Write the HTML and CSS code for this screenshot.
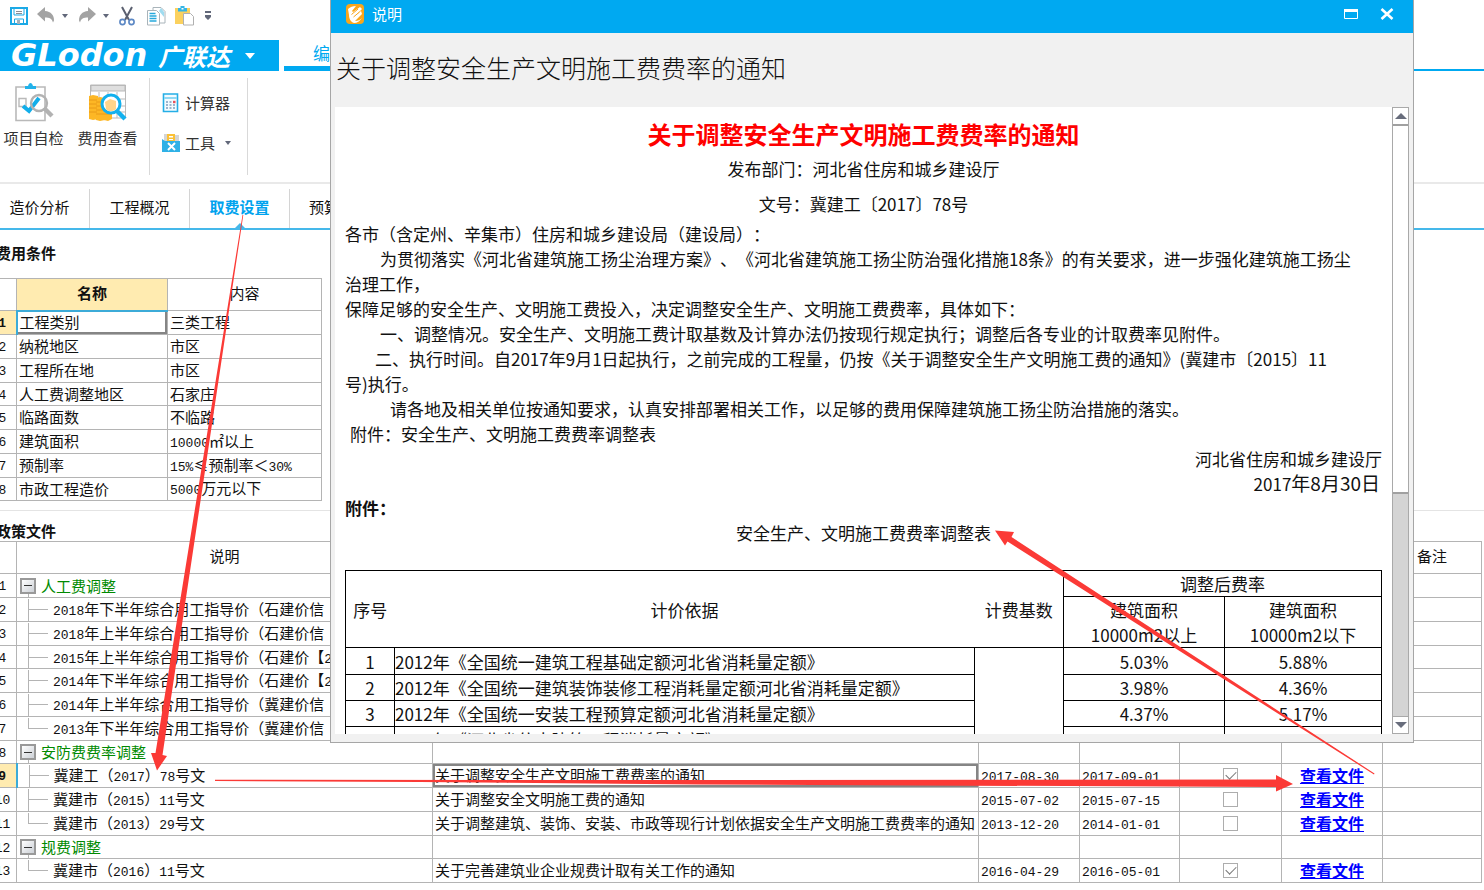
FILE: index.html
```html
<!DOCTYPE html>
<html lang="zh-CN">
<head>
<meta charset="utf-8">
<title>取费设置</title>
<link rel="stylesheet" href="styles.css">
</head>
<body>
<div class="app">
  <header>
    <div class="quickbar">
      <button class="icon-btn" aria-label="保存"><svg width="18" height="18" viewBox="0 0 18 18" fill="none"><path d="M1 1h16v16H1z" stroke="#1ba9e6" stroke-width="2"/><path d="M4 2v6h10V2M4.500 17v-5h9v5" stroke="#1ba9e6"/><path d="M6 4.500h6M6 6.500h6" stroke="#8c8c94"/><path d="M7 13h3v4H7z" fill="#a8b0b8"/></svg></button>
      <button class="icon-btn" aria-label="撤销"><svg width="18" height="18" viewBox="0 0 18 18"><path d="M8 0v4c6 .5 9 4 9 9.500l-1 2c-1-4-3.500-5-8-5v4L0 7z" fill="#a3a3a3"/></svg></button>
      <button class="icon-btn caret" aria-label="撤销列表"><svg width="8" height="6" viewBox="0 0 8 6"><path d="M1 1h6L4 5z" fill="#62687a"/></svg></button>
      <button class="icon-btn" aria-label="恢复"><svg width="18" height="18" viewBox="0 0 18 18"><path d="M10 0v4c-6 .5-9 4-9 9.500l1 2c1-4 3.500-5 8-5v4l8-7.500z" fill="#a3a3a3"/></svg></button>
      <button class="icon-btn caret" aria-label="恢复列表"><svg width="8" height="6" viewBox="0 0 8 6"><path d="M1 1h6L4 5z" fill="#62687a"/></svg></button>
      <button class="icon-btn" aria-label="剪切"><svg width="16" height="20" viewBox="0 0 16 20" fill="none"><path d="M3 1l7 13M13 1l-7 13" stroke="#5b6070" stroke-width="2"/><circle cx="3.500" cy="16" r="2.600" stroke="#5b87c4" stroke-width="1.600"/><circle cx="12.500" cy="16" r="2.600" stroke="#5b87c4" stroke-width="1.600"/></svg></button>
      <button class="icon-btn copy" aria-label="复制"><svg width="20" height="20" viewBox="0 0 20 20" fill="#fff"><path d="M7 1.500h8l4 4V17H7z" stroke="#a9b4ba"/><path d="M13 5l5 6v-5l-3-4z" fill="#9fdcf0"/><path d="M1.500 4.500h9l3 3V19h-12z" stroke="#a9b4ba"/><path d="M3.500 7.500h6M3.500 10h7M3.500 12.500h7M3.500 15h7" stroke="#27a9dc" stroke-width="1.400"/></svg></button>
      <button class="icon-btn" aria-label="粘贴"><svg width="20" height="20" viewBox="0 0 20 20"><path d="M0 2h15v16H0z" fill="#fbd15e"/><path d="M3 2h2.500V0h4v2H12v3.500H3z" fill="#35b5e5"/><path d="M6.500 2h2v1.500h-2z" fill="#fff"/><path d="M8.500 7.500h7l3 3V19h-10z" fill="#fff" stroke="#b0b0b0"/></svg></button>
      <button class="icon-btn" aria-label="更多"><svg width="8" height="10" viewBox="0 0 8 10" fill="#62687a"><path d="M1 0h6v2H1zM1 4h6v2H1zM1 6h6L4 9z"/></svg></button>
    </div>
    <div class="brandbar">
      <button class="brand"><span class="brand-en">GLodon</span><span class="brand-cn">广联达</span><svg width="10" height="6" viewBox="0 0 10 6"><path d="M0 0h10L5 6z" fill="#fff"/></svg></button>
      <button class="ribbon-tab">编</button>
      <span class="brand-line"></span>
    </div>
    <div class="ribbon">
      <button class="big-tool"><svg width="40" height="40" viewBox="0 0 40 40" fill="none"><path d="M2 5h29v33.500H2z" stroke="#b9b9b9" stroke-width="1.600"/><path d="M11 7V4h3c1-4 4-4 5 0h3v3z" fill="#22b2ea"/><path d="M5 16.500h7v8H5z" stroke="#b9b9b9" stroke-width="1.400"/><path d="M9 24l6 5 10-13" stroke="#12aeea" stroke-width="4"/><circle cx="25" cy="21" r="8" stroke="#b2b2b2" stroke-width="2.400"/><path d="M30 26l8 8" stroke="#b2b2b2" stroke-width="4.500"/></svg><span>项目自检</span></button>
      <button class="big-tool"><svg width="40" height="40" viewBox="0 0 40 40" fill="none"><path d="M2.500 3h35v33h-35zM3 17h34M3 24h34M3 30h34M11 10v26M20 10v26M29 10v26" stroke="#b9b9b9"/><path d="M3 3.500h34V9H3z" fill="#dfdfdf" stroke="#b9b9b9"/><path d="M1 14l4-1 5 1v23l-5 1-4-1zM8 16l4-1 5 1v22l-5 1-4-1zM16 29h8v8l-4 2-4-1z" fill="#fdb725"/><path d="M1 18h8M1 22h8M1 26h8M1 30h8M8 20h9M8 24h9M8 28h9M8 32h16" stroke="#e99a18"/><circle cx="23" cy="22" r="9" fill="#fff" stroke="#12b0ee" stroke-width="3"/><path d="M17 20l5-3 6 2v8c-3 3-8 3-10 0z" fill="#ffd48a"/><path d="M29 29l8 8" stroke="#12b0ee" stroke-width="4.500"/></svg><span>费用查看</span></button>
      <div class="small-tools">
        <button class="small-tool"><svg width="18" height="20" viewBox="0 0 18 20" fill="none"><path d="M1.500 1h14v17.500h-14z" fill="#f4fbfe" stroke="#24aee6" stroke-width="1.600"/><path d="M2 4h13v2H2z" fill="#8fd8f4"/><path d="M4 9h2M7.500 9h2M4 12h2M7.500 12h2M11 12h2M4 15h2M7.500 15h2M11 15h2" stroke="#7d9fc0" stroke-width="1.500"/><path d="M11 9h2.500" stroke="#e8505a" stroke-width="2.400"/></svg><span>计算器</span></button>
        <button class="small-tool"><svg width="18" height="20" viewBox="0 0 18 20"><path d="M2 1h5v9H2zM13 2h4v9h-4z" fill="#d5d5d5"/><path d="M5 1h8v9H5z" fill="#fbc136"/><path d="M7 3h4v1.500H7zM7 6h4v1H7z" fill="#fff"/><path d="M0 6l3 2h15v11H0z" fill="#2fb1e6"/><path d="M6 10l7 7M13 10l-7 7" stroke="#fff" stroke-width="2"/></svg><span>工具</span><svg class="drop" width="8" height="6" viewBox="0 0 8 6"><path d="M1 1h6L4 5z" fill="#62687a"/></svg></button>
      </div>
    </div>
  </header>
  <nav class="tabs">
    <button class="tab">造价分析</button>
    <button class="tab">工程概况</button>
    <button class="tab active">取费设置</button>
    <button class="tab lead">预算</button>
  </nav>
  <main>
    <section class="conditions">
      <h2>费用条件</h2>
      <table class="grid cond-grid">
        <colgroup><col class="c-no"><col class="c-name"><col class="c-value"></colgroup>
        <thead><tr><th></th><th class="current">名称</th><th>内容</th></tr></thead>
        <tbody>
          <tr><td class="no current"><span class="num">1</span></td><td class="picked-blue">工程类别</td><td>三类工程</td></tr>
          <tr><td class="no"><span class="num">2</span></td><td>纳税地区</td><td>市区</td></tr>
          <tr><td class="no"><span class="num">3</span></td><td>工程所在地</td><td>市区</td></tr>
          <tr><td class="no"><span class="num">4</span></td><td>人工费调整地区</td><td>石家庄</td></tr>
          <tr><td class="no"><span class="num">5</span></td><td>临路面数</td><td>不临路</td></tr>
          <tr><td class="no"><span class="num">6</span></td><td>建筑面积</td><td><span class="num">10000</span>㎡以上</td></tr>
          <tr><td class="no"><span class="num">7</span></td><td>预制率</td><td><span class="num">15%</span>≤预制率＜<span class="num">30%</span></td></tr>
          <tr><td class="no"><span class="num">8</span></td><td>市政工程造价</td><td><span class="num">5000</span>万元以下</td></tr>
        </tbody>
      </table>
    </section>
    <section class="policies">
      <h2>政策文件</h2>
      <table class="grid policy-grid">
        <colgroup><col class="c-no"><col class="c-desc"><col class="c-title"><col class="c-date"><col class="c-start"><col class="c-check"><col class="c-link"><col></colgroup>
        <thead><tr><th></th><th>说明</th><th></th><th></th><th></th><th></th><th></th><th>备注</th></tr></thead>
        <tbody>
          <tr><td class="no"><span class="num">1</span></td><td class="node"><div class="tree group"><button class="toggle" aria-label="折叠"></button>人工费调整</div></td><td></td><td></td><td></td><td></td><td></td><td></td></tr>
          <tr><td class="no"><span class="num">2</span></td><td class="node"><div class="tree"><i class="branch"></i><span><span class="num">2018</span>年下半年综合用工指导价（石建价信（</span></div></td><td></td><td></td><td></td><td></td><td></td><td></td></tr>
          <tr><td class="no"><span class="num">3</span></td><td class="node"><div class="tree"><i class="branch"></i><span><span class="num">2018</span>年上半年综合用工指导价（石建价信（</span></div></td><td></td><td></td><td></td><td></td><td></td><td></td></tr>
          <tr><td class="no"><span class="num">4</span></td><td class="node"><div class="tree"><i class="branch"></i><span><span class="num">2015</span>年上半年综合用工指导价（石建价【<span class="num">2</span></span></div></td><td></td><td></td><td></td><td></td><td></td><td></td></tr>
          <tr><td class="no"><span class="num">5</span></td><td class="node"><div class="tree"><i class="branch"></i><span><span class="num">2014</span>年下半年综合用工指导价（石建价【<span class="num">2</span></span></div></td><td></td><td></td><td></td><td></td><td></td><td></td></tr>
          <tr><td class="no"><span class="num">6</span></td><td class="node"><div class="tree"><i class="branch"></i><span><span class="num">2014</span>年上半年综合用工指导价（冀建价信</span></div></td><td></td><td></td><td></td><td></td><td></td><td></td></tr>
          <tr><td class="no"><span class="num">7</span></td><td class="node"><div class="tree"><i class="branch last"></i><span><span class="num">2013</span>年下半年综合用工指导价（冀建价信</span></div></td><td></td><td></td><td></td><td></td><td></td><td></td></tr>
          <tr><td class="no"><span class="num">8</span></td><td class="node"><div class="tree group"><button class="toggle" aria-label="折叠"></button>安防费费率调整</div></td><td></td><td></td><td></td><td></td><td></td><td></td></tr>
          <tr><td class="no current"><span class="num">9</span></td><td class="node"><div class="tree"><i class="branch"></i><span>冀建工（<span class="num">2017</span>）<span class="num">78</span>号文</span></div></td><td class="picked">关于调整安全生产文明施工费费率的通知</td><td><span class="num">2017-08-30</span></td><td><span class="num">2017-09-01</span></td><td class="mid"><input type="checkbox" aria-label="冀建工（2017）78号文" checked></td><td class="mid"><a href="#">查看文件</a></td><td></td></tr>
          <tr><td class="no"><span class="num">10</span></td><td class="node"><div class="tree"><i class="branch"></i><span>冀建市（<span class="num">2015</span>）<span class="num">11</span>号文</span></div></td><td>关于调整安全文明施工费的通知</td><td><span class="num">2015-07-02</span></td><td><span class="num">2015-07-15</span></td><td class="mid"><input type="checkbox" aria-label="冀建市（2015）11号文"></td><td class="mid"><a href="#">查看文件</a></td><td></td></tr>
          <tr><td class="no"><span class="num">11</span></td><td class="node"><div class="tree"><i class="branch last"></i><span>冀建市（<span class="num">2013</span>）<span class="num">29</span>号文</span></div></td><td>关于调整建筑、装饰、安装、市政等现行计划依据安全生产文明施工费费率的通知</td><td><span class="num">2013-12-20</span></td><td><span class="num">2014-01-01</span></td><td class="mid"><input type="checkbox" aria-label="冀建市（2013）29号文"></td><td class="mid"><a href="#">查看文件</a></td><td></td></tr>
          <tr><td class="no"><span class="num">12</span></td><td class="node"><div class="tree group"><button class="toggle" aria-label="折叠"></button>规费调整</div></td><td></td><td></td><td></td><td></td><td></td><td></td></tr>
          <tr><td class="no"><span class="num">13</span></td><td class="node"><div class="tree"><i class="branch last"></i><span>冀建市（<span class="num">2016</span>）<span class="num">11</span>号文</span></div></td><td>关于完善建筑业企业规费计取有关工作的通知</td><td><span class="num">2016-04-29</span></td><td><span class="num">2016-05-01</span></td><td class="mid"><input type="checkbox" aria-label="冀建市（2016）11号文" checked></td><td class="mid"><a href="#">查看文件</a></td><td></td></tr>
        </tbody>
      </table>
    </section>
  </main>

  <div class="dialog" role="dialog" aria-labelledby="dialog-name">
    <div class="titlebar">
      <svg width="20" height="20" viewBox="0 0 20 20"><rect x="1" y="0" width="18" height="20" rx="4" fill="#f9a61a"/><path d="M3 5c2-2 5-3 8-3L7 7l1 1 7-5 2 2-6 6 5-4 1 3-7 7c3 0 5-1 7-3-2 3-5 5-8 5-3-1-5-4-5-8z" fill="#fff"/><path d="M6.500 10.500L13 5M8.500 13l6-5" stroke="#f9a61a"/></svg>
      <span id="dialog-name">说明</span>
      <button class="win-btn" aria-label="最大化"><svg width="14" height="10" viewBox="0 0 14 10"><path d="M.5.5h13v9H.5z" fill="none" stroke="#fff"/><path d="M0 0h14v3H0z" fill="#fff"/></svg></button>
      <button class="win-btn" aria-label="关闭"><svg width="14" height="12" viewBox="0 0 14 12"><path d="M1.500 1l11 10M12.500 1l-11 10" stroke="#fff" stroke-width="2.600"/></svg></button>
    </div>
    <h1>关于调整安全生产文明施工费费率的通知</h1>
    <div class="viewer">
      <article class="doc">
        <h3>关于调整安全生产文明施工费费率的通知</h3>
        <p class="meta">发布部门：河北省住房和城乡建设厅</p>
        <p class="meta">文号：冀建工〔2017〕78号</p>
        <p>各市（含定州、辛集市）住房和城乡建设局（建设局）：</p>
        <p class="in-35">为贯彻落实《河北省建筑施工扬尘治理方案》、《河北省建筑施工扬尘防治强化措施18条》的有关要求，进一步强化建筑施工扬尘<br>治理工作，</p>
        <p>保障足够的安全生产、文明施工费投入，决定调整安全生产、文明施工费费率，具体如下：</p>
        <p class="in-35">一、调整情况。安全生产、文明施工费计取基数及计算办法仍按现行规定执行；调整后各专业的计取费率见附件。</p>
        <p class="in-30">二、执行时间。自2017年9月1日起执行，之前完成的工程量，仍按《关于调整安全生产文明施工费的通知》(冀建市〔2015〕11<br>号)执行。</p>
        <p class="in-45">请各地及相关单位按通知要求，认真安排部署相关工作，以足够的费用保障建筑施工扬尘防治措施的落实。</p>
        <p class="in-5">附件：安全生产、文明施工费费率调整表</p>
        <p class="sign">河北省住房和城乡建设厅</p>
        <p class="sign date">2017<span class="big">年8月30日</span></p>
        <p><b>附件：</b></p>
        <p class="caption">安全生产、文明施工费费率调整表</p>
        <table class="rates">
          <colgroup><col class="r-no"><col class="r-basis"><col class="r-base"><col class="r-over"><col class="r-under"></colgroup>
          <thead>
            <tr><th rowspan="2" class="open-r">序号</th><th rowspan="2" class="open-l open-r">计价依据</th><th rowspan="2" class="open-l">计费基数</th><th colspan="2">调整后费率</th></tr>
            <tr><th>建筑面积<br>10000m2以上</th><th>建筑面积<br>10000m2以下</th></tr>
          </thead>
          <tbody>
            <tr><td>1</td><td class="left">2012年《全国统一建筑工程基础定额河北省消耗量定额》</td><td rowspan="4"></td><td>5.03%</td><td>5.88%</td></tr>
            <tr><td>2</td><td class="left">2012年《全国统一建筑装饰装修工程消耗量定额河北省消耗量定额》</td><td>3.98%</td><td>4.36%</td></tr>
            <tr><td>3</td><td class="left">2012年《全国统一安装工程预算定额河北省消耗量定额》</td><td>4.37%</td><td>5.17%</td></tr>
            <tr><td>4</td><td class="left">2012年《河北省仿古建筑工程消耗量定额》</td><td>5.03%</td><td>5.03%</td></tr>
          </tbody>
        </table>
      </article>
      <div class="scrollbar">
        <button aria-label="向上滚动"><svg width="12" height="8" viewBox="0 0 12 8"><path d="M0 7h12L6 1z" fill="#686d7c"/></svg></button>
        <span class="thumb"></span><span class="track"></span>
        <button aria-label="向下滚动"><svg width="12" height="8" viewBox="0 0 12 8"><path d="M0 1h12L6 7z" fill="#686d7c"/></svg></button>
      </div>
    </div>
  </div>

  <svg class="marks" width="1484" height="890" viewBox="0 0 1484 890" fill="#fb3a36">
    <path d="M242.500 215h.8L162.500 755l4.500 1-10 14.500-6-17.500h4.500z"/>
    <path d="M215 779.800l485 .2 576-.5v-4.500l17 9-17 7.500V787l-576-2.500-280-2.500-205-1z"/>
    <path d="M1374.500 773.500L1011.500 537l2.500-5-19-1.500 10 15 2.500-4 366.500 233z"/>
  </svg>
</div>
</body>
</html>
```

FILE: styles.css
```css
* { box-sizing: border-box; }
body {
  margin: 0;
  background: #fff;
  color: #111;
  font: 15px/20px "Noto Sans CJK SC", sans-serif;
  text-spacing-trim: space-all;
}
button {
  margin: 0;
  padding: 0;
  border: 0;
  background: none;
  color: inherit;
  font: inherit;
}
h1, h2, h3, p { margin: 0; }
svg { display: block; flex: none; }

.app {
  position: relative;
  min-height: 100vh;
  overflow: hidden;
}

/* quick access bar */
.quickbar {
  display: flex;
  align-items: center;
  gap: 9px;
  height: 40px;
  padding: 0 10px 8px;
}
.icon-btn.caret { margin-left: -3px; }
.icon-btn.copy { margin-left: 2px; }

/* brand row */
.brandbar {
  display: flex;
  align-items: flex-end;
  height: 31px;
}
.brand {
  display: flex;
  align-items: center;
  width: 279px;
  height: 31px;
  padding-left: 11px;
  background: #00a9f1;
  color: #fff;
  text-align: left;
}
.brand-en {
  width: 147px;
  font: italic bold 32px/31px "DejaVu Sans", sans-serif;
}
.brand-cn {
  width: 87px;
  font-size: 24px;
  line-height: 28px;
  font-weight: bold;
  font-style: italic;
}
.ribbon-tab {
  width: 90px;
  height: 31px;
  margin-left: 5px;
  padding-left: 29px;
  border-bottom: 5px solid #00a9f1;
  color: #00a9f1;
  font-size: 17px;
  line-height: 26px;
  text-align: left;
}
.brand-line {
  flex: 1;
  height: 2px;
  background: #00a9f1;
}

/* ribbon */
.ribbon {
  display: flex;
  height: 113px;
  padding: 7px 0;
  border-bottom: 2px solid #e9e9e9;
  color: #333;
}
.big-tool {
  display: flex;
  flex-direction: column;
  align-items: center;
  gap: 6px;
  width: 74px;
  padding: 4px 7px 0 0;
  white-space: nowrap;
}
.small-tools {
  display: flex;
  flex-direction: column;
  gap: 20px;
  width: 99px;
  margin-left: 1px;
  padding: 15px 0 0 12px;
  border: solid #d9d9d9;
  border-width: 0 1px;
}
.small-tool {
  display: flex;
  align-items: center;
  gap: 5px;
}
.small-tool .drop { margin-left: 4px; }

/* module tabs */
.tabs {
  display: flex;
  height: 46px;
  margin-left: -10px;
  padding-top: 5px;
  border-bottom: 2px solid #45b8ea;
}
.tab {
  position: relative;
  width: 100px;
  padding-bottom: 3px;
  border-right: 1px solid #d4d4d4;
}
.tab.lead {
  padding-left: 19px;
  text-align: left;
}
.tab.active {
  color: #00a3ee;
  font-weight: bold;
}
.tab.active::after {
  content: "";
  position: absolute;
  bottom: 0;
  left: calc(50% - 5px);
  border: 5px solid transparent;
  border-top-width: 0;
  border-bottom-color: #45b8ea;
}

/* data grids */
h2 {
  margin-left: -4px;
  font-size: 15px;
  line-height: 20px;
}
.conditions {
  height: 281px;
  padding-top: 13px;
  border-bottom: 1px solid #e4e4e4;
}
.conditions h2 { padding-bottom: 15px; }
.policies { padding-top: 10px; }
.grid {
  table-layout: fixed;
  margin-left: -12px;
  border-collapse: collapse;
}
.cond-grid { width: 334px; }
.policy-grid { width: calc(100% + 10px); }
.grid th, .grid td {
  padding: 0 2px 1px;
  border: 1px solid #b4b4b4;
  font-weight: normal;
  line-height: 20px;
  text-align: left;
  white-space: nowrap;
}
.grid thead tr { height: 32px; }
.grid tbody tr { height: 24px; }
.grid tbody tr:nth-child(4n) { height: 23px; }
.grid th {
  padding-bottom: 3px;
  text-align: center;
}
.grid .no, .grid .mid { text-align: center; }
.grid .no {
  padding: 0;
  line-height: 16px;
}
.grid .node { padding-bottom: 0; }
.grid th.current {
  border-bottom: 2px solid #3cabd8;
  background: #ffebb0;
  font-weight: bold;
}
.grid td.current {
  border-right: 2px solid #3cabd8;
  background: #ffebb0;
  font-weight: bold;
}
.picked { box-shadow: inset 0 0 0 2px #858585; }
.picked-blue { box-shadow: inset -2px -2px #858585; }
.num {
  font-family: "Liberation Mono", monospace;
  font-size: 13px;
  line-height: 16px;
}
.c-no { width: 28px; }
.c-name { width: 151px; }
.c-desc { width: 416px; }
.c-title { width: 546px; }
.c-date, .c-link { width: 101px; }
.c-start { width: 100px; }
.c-check { width: 102px; }
.grid a {
  color: #00f;
  font-size: 16px;
  font-weight: bold;
}
input[type="checkbox"] {
  appearance: none;
  display: block;
  width: 15px;
  height: 15px;
  margin: 0 auto;
  border: 1px solid #adadad;
  background: #fff;
}
input[type="checkbox"]:checked::before {
  content: "";
  display: block;
  width: 9px;
  height: 5px;
  margin: 2px;
  border: solid #777;
  border-width: 0 0 1px 1px;
  transform: rotate(-45deg);
}
.tree {
  display: flex;
  align-items: center;
  height: 22px;
  padding-left: 9px;
}
.tree.group {
  gap: 5px;
  padding-left: 1px;
  background: linear-gradient(#b4b4b4, #b4b4b4) 9px 100% / 1px 6px no-repeat;
  color: #008a00;
}
.toggle {
  width: 16px;
  height: 16px;
  border: 2px solid #999;
  background: linear-gradient(#333, #333) center / 8px 1px no-repeat, linear-gradient(135deg, #fff, #ccd0d6);
}
.branch {
  align-self: stretch;
  width: 20px;
  margin-right: 5px;
  background: linear-gradient(#b4b4b4, #b4b4b4) 0 50% / 20px 1px no-repeat, linear-gradient(#b4b4b4, #b4b4b4) 0 0 / 1px 100% no-repeat;
}
.branch.last {
  background-size: 20px 1px, 1px 50%;
}

/* notice dialog */
.dialog {
  position: absolute;
  top: 0;
  left: 330px;
  right: 70px;
  padding-bottom: 8px;
  border: 1px solid #a6a6a6;
  border-top: 0;
  background: #f1f1f1;
}
.titlebar {
  display: flex;
  align-items: center;
  gap: 7px;
  height: 33px;
  padding: 0 19px 6px 14px;
  background: #00a9f1;
  color: #fff;
}
.titlebar span { flex: 1; }
.win-btn + .win-btn { margin-left: 15px; }
.dialog h1 {
  height: 74px;
  padding: 16px 0 0 5px;
  font-size: 25px;
  font-weight: 300;
  line-height: 36px;
}
.viewer {
  display: flex;
  height: 627px;
  margin: 0 4px;
  background: #fff;
}
.doc {
  flex: 1;
  padding: 9px 10px 0;
  overflow: hidden;
  font-size: 17px;
  line-height: 25px;
  white-space: nowrap;
}
.doc h3 {
  color: #f00;
  font-size: 24px;
  line-height: 35px;
  text-align: center;
}
.meta {
  line-height: 35px;
  text-align: center;
}
.in-5 { text-indent: 5px; }
.in-30 { text-indent: 30px; }
.in-35 { text-indent: 35px; }
.in-45 { text-indent: 45px; }
.sign { text-align: right; }
.date {
  padding-right: 2px;
  line-height: 23px;
}
.big { font-size: 19px; }
.caption { text-align: center; }
.rates {
  table-layout: fixed;
  width: 100%;
  margin-top: 25px;
  border-collapse: collapse;
}
.rates th, .rates td {
  height: 26px;
  padding: 0;
  border: 1px solid #000;
  font-weight: normal;
  text-align: center;
}
.rates tbody tr:first-child { height: 27px; }
.rates .left { text-align: left; }
.rates .open-l { border-left: 0; }
.rates .open-r { border-right: 0; }
.r-no { width: 49px; }
.r-base { width: 89px; }
.r-over { width: 161px; }
.r-under { width: 157px; }
.scrollbar {
  display: flex;
  flex-direction: column;
  width: 17px;
  border: 1px solid #a9a9a9;
}
.scrollbar button {
  display: flex;
  align-items: center;
  justify-content: center;
  height: 16px;
}
.thumb {
  flex: 368;
  border: solid #a0a0a0;
  border-width: 2px 0;
}
.track {
  flex: 224;
  border-bottom: 1px solid #a9a9a9;
  background: #d4d4d4;
}

/* red pointer marks over the whole window */
.marks {
  position: absolute;
  top: 0;
  left: 0;
  pointer-events: none;
}
```
